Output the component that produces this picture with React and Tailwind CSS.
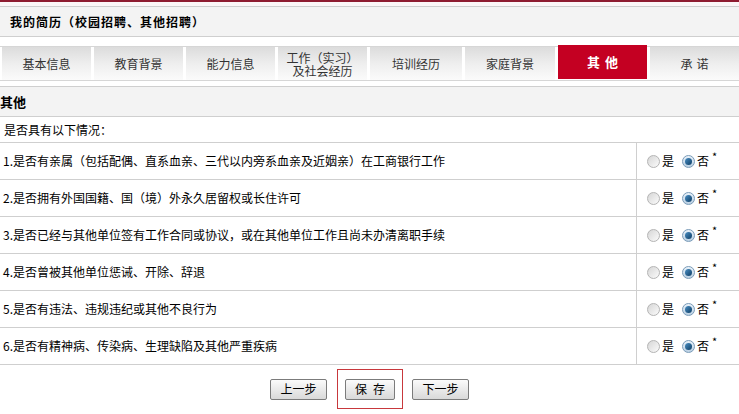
import React from "react";

const FONT = { fontFamily: '"SimSun","Noto Sans CJK SC","Liberation Sans",sans-serif' };

const tabs = [
  { label: "基本信息", w: "w-[89px]" },
  { label: "教育背景", w: "w-[89px]" },
  { label: "能力信息", w: "w-[89px]" },
  { label: "工作（实习）\n及社会经历", w: "w-[89px]", two: true },
  { label: "培训经历", w: "w-[92px]" },
  { label: "家庭背景", w: "w-[90px]" },
  { label: "其他", w: "w-[89px]", active: true },
  { label: "承诺", w: "flex-1" },
];

const questions = [
  "1.是否有亲属（包括配偶、直系血亲、三代以内旁系血亲及近姻亲）在工商银行工作",
  "2.是否拥有外国国籍、国（境）外永久居留权或长住许可",
  "3.是否已经与其他单位签有工作合同或协议，或在其他单位工作且尚未办清离职手续",
  "4.是否曾被其他单位惩诫、开除、辞退",
  "5.是否有违法、违规违纪或其他不良行为",
  "6.是否有精神病、传染病、生理缺陷及其他严重疾病",
];

function Radio({ checked }) {
  return (
    <span
      className={
        "relative inline-flex items-center justify-center w-[13px] h-[13px] rounded-full border " +
        (checked
          ? "border-[#7a9bb8] bg-gradient-to-b from-[#e9f2fa] to-[#b9cfe2]"
          : "border-[#b4b4b4] bg-gradient-to-br from-[#d6d6d6] to-[#fbfbfb]")
      }
    >
      {checked && (
        <span className="w-[7px] h-[7px] rounded-full bg-gradient-to-br from-[#4a8fc4] to-[#0d3f66]" />
      )}
    </span>
  );
}

function Btn({ children, w }) {
  return (
    <button
      className={
        "h-[21px] " +
        w +
        " border border-[#7b7b7b] rounded-[2px] bg-gradient-to-b from-[#fbfbfb] to-[#d9d9d9] text-[12px] text-black flex items-center justify-center leading-none"
      }
    >
      {children}
    </button>
  );
}

export default function App() {
  return (
    <div className="w-[739px] h-[414px] bg-white text-black overflow-hidden text-[12px]" style={FONT}>
      <div className="h-[2px] bg-[#8e1b30]" />
      <div className="h-[4px] bg-[#fbf6f7]" />
      <div className="h-[31px] border-y border-[#cfcfcf] bg-[#f3f3f3] flex items-center pl-[10px]">
        <span className="font-bold text-[12px] tracking-[1px]">我的简历（校园招聘、其他招聘）</span>
      </div>
      <div className="h-[9px]" />
      <div className="h-[35px] border-y border-[#d6d6d6] flex gap-[3px] pl-[2px] items-stretch">
        {tabs.map((t, i) =>
          t.active ? (
            <div
              key={i}
              className={t.w + " -mt-[2px] mb-[1px] bg-[#c40022] text-white font-bold text-[13px] flex items-center justify-center tracking-[5px] pl-[5px]"}
            >
              {t.label}
            </div>
          ) : (
            <div
              key={i}
              className={
                t.w +
                " bg-gradient-to-b from-[#dcdcdc] via-[#eeeeee] to-[#fbfbfb] text-[#333] flex items-center justify-center text-center leading-[13px] whitespace-pre " +
                (t.label.length === 2 ? "tracking-[4px] pl-[4px]" : "")
              }
            >
              {t.label}
            </div>
          )
        )}
      </div>
      <div className="h-[5px]" />
      <div className="h-[31px] border-y border-[#cfcfcf] bg-[#f3f3f3] flex items-center">
        <span className="font-bold text-[13px]">其他</span>
      </div>
      <div className="h-[26px] border-b border-[#cfcfcf] flex items-center pl-[4px]">是否具有以下情况：</div>
      {questions.map((q, i) => (
        <div key={i} className="h-[37px] border-b border-[#cfcfcf] flex">
          <div className="flex-1 flex items-center pl-[3px]">{q}</div>
          <div className="w-[103px] border-l border-[#cfcfcf] flex items-center pl-[10px]">
            <Radio />
            <span className="ml-[2px]">是</span>
            <span className="ml-[8px]" />
            <Radio checked />
            <span className="ml-[2px]">否</span>
            <span className="ml-[3px] -mt-[10px] text-[11px]">*</span>
          </div>
        </div>
      ))}
      <div className="flex justify-center items-center mt-[4px]">
        <Btn w="w-[57px]">上一步</Btn>
        <div className="ml-[10px] w-[66px] h-[40px] border border-[#c8383c] flex items-center justify-center">
          <Btn w="w-[50px]">
            <span>保</span>
            <span className="w-[6px]" />
            <span>存</span>
          </Btn>
        </div>
        <div className="ml-[9px]">
          <Btn w="w-[57px]">下一步</Btn>
        </div>
      </div>
    </div>
  );
}
